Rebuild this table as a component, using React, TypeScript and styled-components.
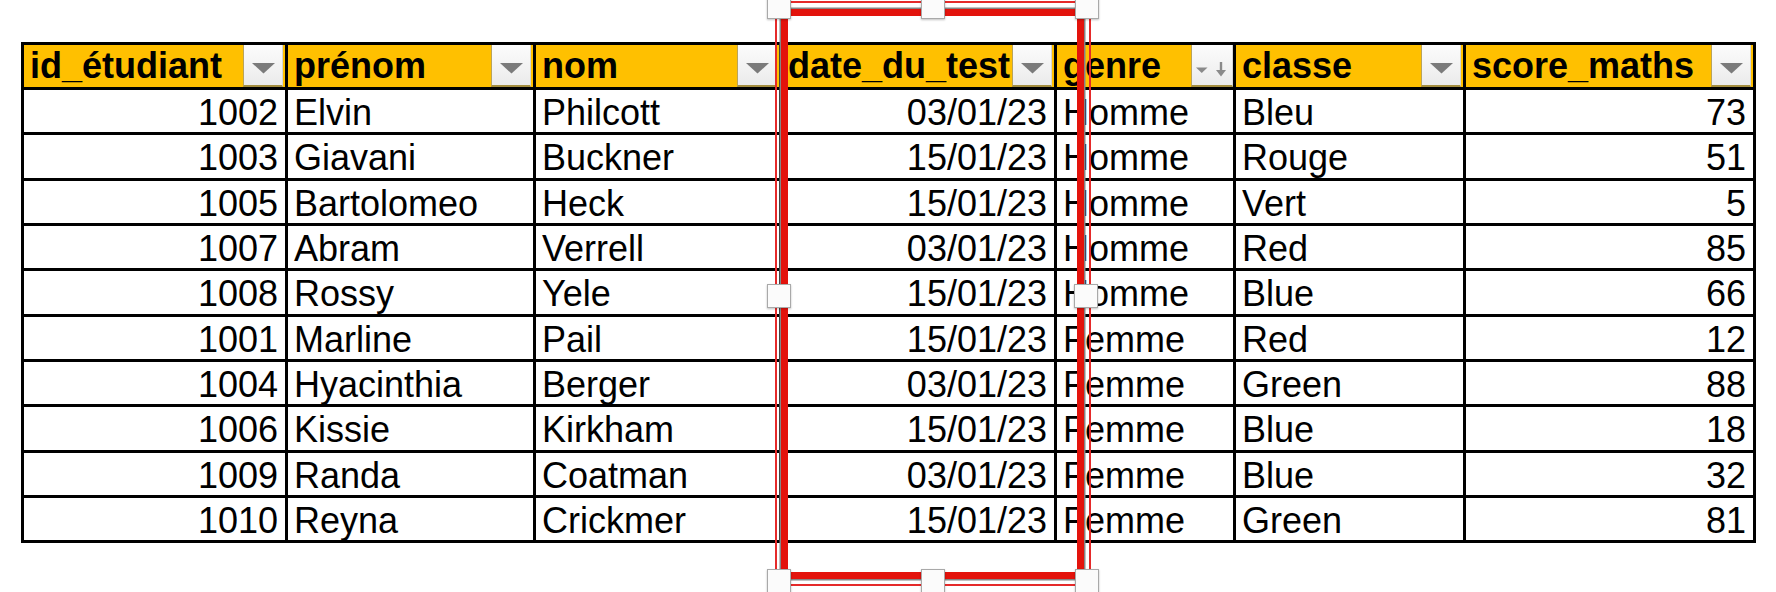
import React from "react";
import styled, { createGlobalStyle } from "styled-components";

const GlobalStyle = createGlobalStyle`
  html, body {
    margin: 0;
    padding: 0;
    background: #ffffff;
  }
  body {
    font-family: "Liberation Sans", Arial, sans-serif;
    color: #000;
  }
`;

type Align = "left" | "right";

interface Column {
  key: string;
  label: string;
  width: number;
  align: Align;
  sort?: boolean;
}

const columns: Column[] = [
  { key: "id", label: "id_étudiant", width: 264, align: "right" },
  { key: "prenom", label: "prénom", width: 248, align: "left" },
  { key: "nom", label: "nom", width: 246, align: "left" },
  { key: "date", label: "date_du_test", width: 275, align: "right" },
  { key: "genre", label: "genre", width: 179, align: "left", sort: true },
  { key: "classe", label: "classe", width: 230, align: "left" },
  { key: "score", label: "score_maths", width: 287, align: "right" },
];

const rows: string[][] = [
  ["1002", "Elvin", "Philcott", "03/01/23", "Homme", "Bleu", "73"],
  ["1003", "Giavani", "Buckner", "15/01/23", "Homme", "Rouge", "51"],
  ["1005", "Bartolomeo", "Heck", "15/01/23", "Homme", "Vert", "5"],
  ["1007", "Abram", "Verrell", "03/01/23", "Homme", "Red", "85"],
  ["1008", "Rossy", "Yele", "15/01/23", "Homme", "Blue", "66"],
  ["1001", "Marline", "Pail", "15/01/23", "Femme", "Red", "12"],
  ["1004", "Hyacinthia", "Berger", "03/01/23", "Femme", "Green", "88"],
  ["1006", "Kissie", "Kirkham", "15/01/23", "Femme", "Blue", "18"],
  ["1009", "Randa", "Coatman", "03/01/23", "Femme", "Blue", "32"],
  ["1010", "Reyna", "Crickmer", "15/01/23", "Femme", "Green", "81"],
];

const Page = styled.div`
  position: relative;
  width: 1776px;
  height: 592px;
  overflow: hidden;
  box-sizing: border-box;
  padding: 42px 0 0 21px;
`;

const Sheet = styled.div<{ $cols: string }>`
  display: grid;
  grid-template-columns: ${(p) => p.$cols};
  grid-template-rows: 42.2px repeat(10, 45.3px);
  width: fit-content;
  border: 3px solid #000;
  box-sizing: content-box;
`;

const HeaderCell = styled.div<{ $last: boolean }>`
  display: flex;
  align-items: stretch;
  justify-content: space-between;
  background: #ffc000;
  border-right: ${(p) => (p.$last ? "none" : "3px solid #000")};
  padding: 0 2px 0 6px;
  overflow: hidden;
  min-width: 0;
`;

const HeaderLabel = styled.span`
  align-self: center;
  flex: 0 0 auto;
  font-weight: 700;
  font-size: 36px;
  line-height: 40px;
  white-space: nowrap;
`;

const FilterButton = styled.div<{ $wide: boolean }>`
  flex: 0 0 auto;
  width: ${(p) => (p.$wide ? 42 : 40)}px;
  margin-right: ${(p) => (p.$wide ? -2 : 0)}px;
  box-sizing: border-box;
  background: linear-gradient(#fcfcfc, #ebebeb);
  border-left: 1.5px solid #b9a45c;
  border-bottom: 2px solid #a48e3f;
  border-right: 1px solid #d6d6d6;
  display: flex;
  align-items: flex-start;
  justify-content: center;
  padding-top: 18px;
`;

const Cell = styled.div<{ $align: Align; $last: boolean }>`
  border-top: 3px solid #000;
  border-right: ${(p) => (p.$last ? "none" : "3px solid #000")};
  padding: 3px 7px 0 6px;
  font-size: 36px;
  line-height: 40px;
  text-align: ${(p) => p.$align};
  white-space: nowrap;
  overflow: hidden;
  min-width: 0;
`;

const Frame = styled.div`
  position: absolute;
  left: 0;
  top: 0;
  width: 100%;
  height: 100%;
  pointer-events: none;
`;

const ThinLine = styled.div`
  position: absolute;
  left: 775px;
  top: 1px;
  width: 316px;
  height: 585px;
  box-sizing: border-box;
  border: 2px solid #e52a2a;
`;

const ThickLine = styled.div`
  position: absolute;
  left: 781px;
  top: 9px;
  width: 303px;
  height: 570px;
  box-sizing: border-box;
  border: 7px solid #e3130c;
  box-shadow: 0 0 0 1.5px #858585;
`;

const Handle = styled.div`
  position: absolute;
  width: 24px;
  height: 24px;
  box-sizing: border-box;
  background: #fbfbfb;
  border: 1px solid #a9a9a9;
  box-shadow: 0 1px 2px rgba(0, 0, 0, 0.25);
`;

const handles: [number, number][] = [
  [779, 7],
  [933, 7],
  [1087, 7],
  [779, 296],
  [1086, 296],
  [779, 581],
  [933, 581],
  [1087, 581],
];

const FilterIcon: React.FC = () => (
  <svg width="23" height="11" viewBox="0 0 23 11">
    <polygon points="0,0 23,0 11.5,10.5" fill="#7b7b7b" />
  </svg>
);

const SortIcon: React.FC = () => (
  <svg width="34" height="16" viewBox="0 0 34 16" style={{ marginTop: -1 }}>
    <polygon points="1,5.5 12.5,5.5 6.75,11" fill="#8a8a8a" />
    <line x1="26" y1="0" x2="26" y2="12" stroke="#8a8a8a" strokeWidth="2.4" />
    <polygon points="21,8 31,8 26,14.5" fill="#8a8a8a" />
  </svg>
);

export default function App() {
  const cols = columns.map((c) => `${c.width}px`).join(" ");
  return (
    <>
      <GlobalStyle />
      <Page>
        <Sheet $cols={cols}>
          {columns.map((c, i) => (
            <HeaderCell key={c.key} $last={i === columns.length - 1}>
              <HeaderLabel>{c.label}</HeaderLabel>
              <FilterButton $wide={!!c.sort}>
                {c.sort ? <SortIcon /> : <FilterIcon />}
              </FilterButton>
            </HeaderCell>
          ))}
          {rows.map((r, ri) =>
            r.map((v, ci) => (
              <Cell
                key={`${ri}-${ci}`}
                $align={columns[ci].align}
                $last={ci === columns.length - 1}
              >
                {v}
              </Cell>
            ))
          )}
        </Sheet>
        <Frame>
          <ThinLine />
          <ThickLine />
          {handles.map(([x, y], i) => (
            <Handle key={i} style={{ left: x - 12, top: y - 12 }} />
          ))}
        </Frame>
      </Page>
    </>
  );
}
